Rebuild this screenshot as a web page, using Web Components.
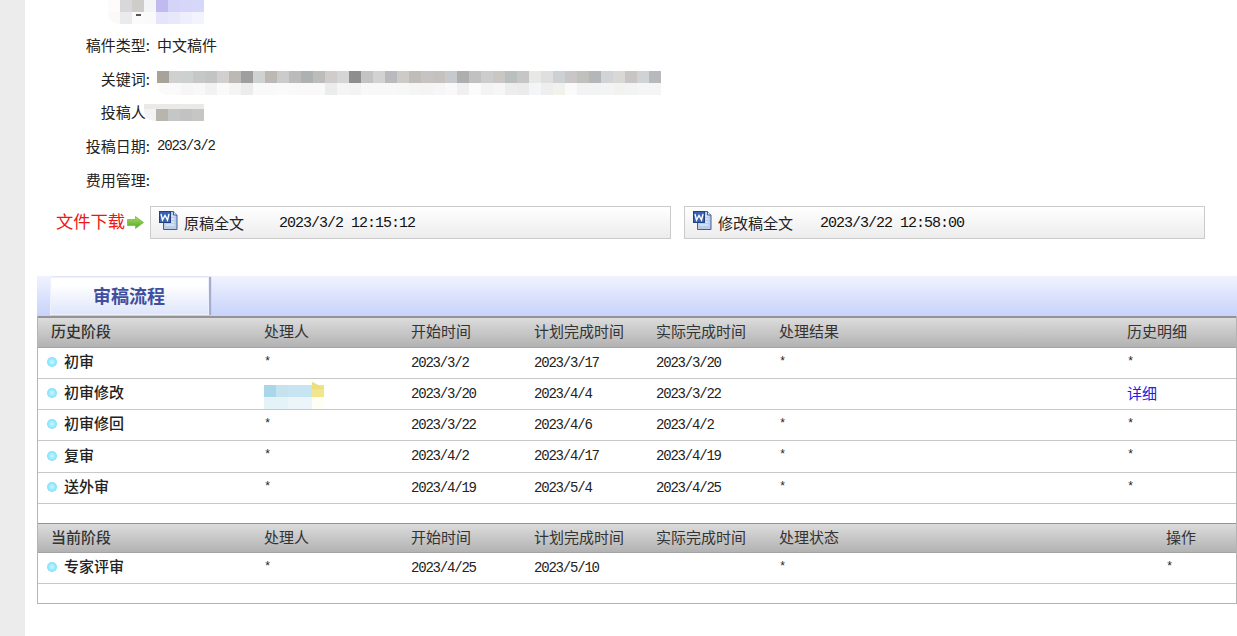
<!DOCTYPE html>
<html lang="zh">
<head>
<meta charset="utf-8">
<title>审稿流程</title>
<style>
  html, body { margin: 0; height: 636px; overflow: hidden; background: #fff; }
  body { font: 15px/20px "Noto Sans CJK SC", sans-serif; color: #222; }
</style>
</head>
<body>
<page-shell>
  <mosaic-strip top="#fdfcfa,#d8d8da,#cfcdc9,#f3f4f6,#c0baf0,#d4d4f8,#d6d6f8,#d6d8fa" bottom="#fbfaf8,#eaebec,#fbfbfb,#fafafb,#e6e4fa,#e8e8fb,#eeeefc,#f3f3fd" style="margin-left:83px;height:24px"><span style="position:absolute;left:28px;top:14px;width:5px;height:2px;background:#555"></span></mosaic-strip>
  <info-row label="稿件类型:" style="margin-top:4px"><span>中文稿件</span></info-row>
  <info-row label="关键词:">
    <mosaic-strip top="#a8a29c,#d0d0d0,#cdd0d0,#c6c8c8,#c2c4c4,#d2d0ce,#bcb8b4,#9e9e9e,#ced2d0,#bcb8b4,#cbcbcb,#bdbabc,#adb1b1,#bcbdbb,#d0cccb,#d5d5d7,#8e8e8e,#c4c2c2,#d2d2d0,#b8babe,#cdcbc8,#c0bdb8,#c6c3c2,#c5c1bf,#c6cace,#aeaeae,#c1c1c3,#cbcccb,#c8c7c3,#b9bfbf,#c6c6c6,#e8e8e6,#e0dfdf,#cdd1d3,#cac5c6,#c0c0bd,#b4b6b9,#d1d3d6,#d9d8d5,#c9c5c4,#d0d3d6,#b8b9bd" bottom="#fafafa,#fafafa,#f6f6f6,#f8f8f8,#f2f2f2,#fafafa,#f4f4f4,#ececec,#f9f9f9,#f9f9f9,#fafafa,#f9f9f9,#f9f9f9,#f9f9f9,#ececec,#f5f5f5,#f3f3f3,#f8f8f8,#f8f8f8,#f8f8f8,#f7f7f7,#f5f5f5,#f4f4f4,#f6f6f6,#f9f9f9,#f0f0f0,#fbfbfb,#f3f3f3,#f6f6f6,#ededed,#ebebeb,#f3f5f8,#eeeeee,#f1f1ee,#fafafa,#f3f3f3,#f2f4f3,#f4f4f4,#f2f2f0,#f3f3f3,#f5f5f5,#f5f5f5" style="height:24px;margin-top:8px"></mosaic-strip>
  </info-row>
  <info-row label="投稿人:" style="--value-shift:-13px">
    <mosaic-strip top="#f3f3f5,#b8b4ae,#c4c7c5,#c2c2c2,#c6c6c4" bottom="#f3f3f5,#b8b4ae,#c4c7c5,#c2c2c2,#c6c6c4" style="height:12px;border-top:5px solid #ebe9e7"></mosaic-strip>
  </info-row>
  <info-row label="投稿日期:"><span class="num">2023/3/2</span></info-row>
  <info-row label="费用管理:"></info-row>

  <download-bar>
    <file-box name="原稿全文" time="2023/3/2 12:15:12" gap="35"></file-box>
    <file-box name="修改稿全文" time="2023/3/22 12:58:00" gap="27"></file-box>
  </download-bar>

  <section-tab title="审稿流程"></section-tab>

  <flow-table>
    <flow-head cells="历史阶段|处理人|开始时间|计划完成时间|实际完成时间|处理结果|历史明细" style="height:32px"></flow-head>
    <flow-row name="初审" cells="*|2023/3/2|2023/3/17|2023/3/20|*|*"></flow-row>
    <flow-row name="初审修改" cells="|2023/3/20|2023/4/4|2023/3/22||详细" blur></flow-row>
    <flow-row name="初审修回" cells="*|2023/3/22|2023/4/6|2023/4/2|*|*"></flow-row>
    <flow-row name="复审" cells="*|2023/4/2|2023/4/17|2023/4/19|*|*" style="height:32px"></flow-row>
    <flow-row name="送外审" cells="*|2023/4/19|2023/5/4|2023/4/25|*|*"></flow-row>
    <flow-spacer></flow-spacer>
    <flow-head cells="当前阶段|处理人|开始时间|计划完成时间|实际完成时间|处理状态|操作" shift-last style="height:30px;border-top-width:1px"></flow-head>
    <flow-row name="专家评审" cells="*|2023/4/25|2023/5/10||*|*" shift-last></flow-row>
    <flow-spacer last></flow-spacer>
  </flow-table>
</page-shell>

<script>
const COLS = '226px 147px 123px 122px 123px 348px 1fr';
const MONO = '"Liberation Mono", monospace';

// dates use a tall narrow mono so digits are about as high as the CJK text
const DATE_FONT = `font: 14px/20px ${MONO}; letter-spacing: -1.2px;`;

class PageShell extends HTMLElement {
  connectedCallback() {
    this.attachShadow({ mode: 'open' });
    this.shadowRoot.innerHTML = `
      <style>
        :host { display: block; height: 636px; background: #fff; border-left: 25px solid #ececec; box-sizing: border-box; }
      </style>
      <slot></slot>`;
  }
}

class MosaicStrip extends HTMLElement {
  connectedCallback() {
    const top = (this.getAttribute('top') || '').split(',');
    const bottom = (this.getAttribute('bottom') || '').split(',');
    const cells = list => list.map(c => `<i style="background:${c}"></i>`).join('');
    this.attachShadow({ mode: 'open' });
    this.shadowRoot.innerHTML = `
      <style>
        :host { display: block; position: relative; width: max-content; overflow: hidden; border-bottom-left-radius: 10px; }
        .row { display: flex; height: 50%; }
        i { display: block; width: 12px; flex: none; }
      </style>
      <div class="row">${cells(top)}</div>
      <div class="row">${cells(bottom)}</div>
      <slot></slot>`;
  }
}

class InfoRow extends HTMLElement {
  connectedCallback() {
    this.attachShadow({ mode: 'open' });
    this.shadowRoot.innerHTML = `
      <style>
        :host { display: flex; align-items: center; height: 33.75px; }
        .label { width: 125px; text-align: right; flex: none; white-space: nowrap; font-size: 15px; }
        .value { margin-left: calc(7px + var(--value-shift, 0px)); position: relative; font-size: 15px; }
        ::slotted(.num) { ${DATE_FONT} }
        ::slotted(span) { display: block; }
      </style>
      <div class="label">${this.getAttribute('label')}</div>
      <div class="value"><slot></slot></div>`;
  }
}

class DownloadBar extends HTMLElement {
  connectedCallback() {
    this.attachShadow({ mode: 'open' });
    this.shadowRoot.innerHTML = `
      <style>
        :host { display: flex; align-items: center; gap: 13px; margin-top: 9px; padding-left: 31px; height: 33px; }
        .label { display: flex; align-items: center; width: 94px; margin-right: -13px; padding-bottom: 2px; color: #f01414; font-size: 17.25px; white-space: nowrap; }
        svg { margin-left: 2px; margin-top: 2px; flex: none; }
      </style>
      <div class="label">文件下载
        <svg width="17" height="13" viewBox="0 0 17 13">
          <defs><linearGradient id="a" x1="0" x2="0" y1="0" y2="1"><stop offset="0" stop-color="#a8dc5c"/><stop offset="1" stop-color="#4fa82a"/></linearGradient></defs>
          <path d="M.5 3.5h8V.5l8 6-8 6v-3h-8z" fill="url(#a)" stroke="#7cb84a" stroke-width=".8"/>
        </svg>
      </div>
      <slot></slot>`;
  }
}

class FileBox extends HTMLElement {
  connectedCallback() {
    this.attachShadow({ mode: 'open' });
    this.shadowRoot.innerHTML = `
      <style>
        :host { display: flex; align-items: center; box-sizing: border-box; width: 521px; height: 33px; padding-left: 7px; border: 1px solid #cbcbcb; background: linear-gradient(#fff, #ececec); font-size: 15px; color: #222; }
        svg { flex: none; margin: -5px 6px 0 0; }
        .name { padding-top: 1px; }
        .time { font: 15px/20px "Liberation Mono", monospace; letter-spacing: -1px; color: #111; white-space: pre; padding-top: 3px; }
      </style>
      <svg width="20" height="21" viewBox="0 0 20 21">
        <path d="M5.500 2.500h10l3.500 3.500v14.500H5.500z" fill="#b9cce8" stroke="#3c5f9e"/>
        <path d="M7.500 7h9M7.500 10h9M7.500 13h9M7.500 16h9" stroke="#eef3fb" stroke-width="1.200"/>
        <path d="M15.500 2.500V6H19" fill="#e8eefa" stroke="#3c5f9e"/>
        <rect x="1.500" y="2.500" width="11" height="11" fill="#3a62b4" stroke="#22427f"/>
        <path d="M3 5l1.500 6L7 6.500 9.500 11 11 5" fill="none" stroke="#fff" stroke-width="1.400"/>
      </svg>
      <span class="name">${this.getAttribute('name')}</span>
      <span class="time" style="margin-left:${this.getAttribute('gap')}px">${this.getAttribute('time')}</span>`;
  }
}

class SectionTab extends HTMLElement {
  connectedCallback() {
    this.attachShadow({ mode: 'open' });
    this.shadowRoot.innerHTML = `
      <style>
        :host { display: flex; margin: 37px 0 0 12px; height: 40px; padding-left: 13px; box-sizing: border-box; background: linear-gradient(#f0f3fe, #c8d2fb); }
        .tab { box-sizing: border-box; width: 159px; height: 38px; margin-top: 1px; padding-left: 42px; background: linear-gradient(#fff 20%, #dfe5fb); border: 1px solid #eef0fb; box-shadow: 2px 0 1px #a4acd0; font-size: 18px; line-height: 34px; font-weight: 700; color: #3f4fa0; }
      </style>
      <div class="tab">${this.getAttribute('title')}</div>`;
  }
}

class FlowTable extends HTMLElement {
  connectedCallback() {
    this.attachShadow({ mode: 'open' });
    this.shadowRoot.innerHTML = `
      <style>
        :host { display: block; margin-left: 12px; border: solid #b4b4b4; border-width: 0 1px; }
      </style>
      <slot></slot>`;
  }
}

class FlowHead extends HTMLElement {
  connectedCallback() {
    const cells = this.getAttribute('cells').split('|');
    const last = cells.length - 1;
    const shift = this.hasAttribute('shift-last');
    this.attachShadow({ mode: 'open' });
    this.shadowRoot.innerHTML = `
      <style>
        :host { display: grid; grid-template-columns: ${COLS}; align-items: center; box-sizing: border-box; height: 31px; padding-bottom: 2px; border-top: 2px solid #949494; border-bottom: 1px solid #a4a4a4; background: linear-gradient(#dcdcdc, #b2b2b2); font-size: 15px; color: #333; }
        div { white-space: nowrap; }
        div:first-of-type { padding-left: 13px; font-weight: 500; }
      </style>
      ${cells.map((c, i) => `<div style="${i === last && shift ? 'padding-left:39px' : ''}">${c}</div>`).join('')}`;
  }
}

class FlowRow extends HTMLElement {
  connectedCallback() {
    const cells = this.getAttribute('cells').split('|');
    const last = cells.length - 1;
    const shift = this.hasAttribute('shift-last');
    const blur = this.hasAttribute('blur');
    const cell = (c, i) => {
      const pad = i === last && shift ? 'padding-left:39px;' : '';
      if (c === '详细') return `<div class="link" style="${pad}">${c}</div>`;
      return `<div class="${c === '*' ? 'star' : 'num'}" style="${pad}">${c}</div>`;
    };
    this.attachShadow({ mode: 'open' });
    this.shadowRoot.innerHTML = `
      <style>
        :host { display: grid; grid-template-columns: ${COLS}; align-items: center; box-sizing: border-box; height: 31px; border-bottom: 1px solid #c8c8c8; position: relative; font-size: 15px; color: #222; }
        .name { display: flex; align-items: center; font-weight: 500; padding: 0 0 3px 9px; white-space: nowrap; line-height: 18px; }
        .dot { width: 10px; height: 10px; border-radius: 50%; margin-right: 7px; margin-top: 2px; background: radial-gradient(circle, #d2f6ff 0, #8ce6ff 55%, #6cd6fa 100%); }
        .num { ${DATE_FONT} color: #222; }
        .star { font: 12px/20px ${MONO}; color: #222; margin-top: -2px; }
        .link { color: #2222dd; margin-top: -2px; }
        .blur { position: absolute; left: 226px; top: 6px; display: grid; grid-template-columns: repeat(5, 12px); grid-auto-rows: 12px; }
        .blur i { display: block; }
        .flag { position: absolute; left: 274px; top: 3px; width: 13px; height: 8px; background: #ecdf7c; clip-path: polygon(0 0, 100% 85%, 0 100%); }
      </style>
      <div class="name"><span class="dot"></span>${this.getAttribute('name')}</div>
      ${cells.map(cell).join('')}
      ${blur ? `<div class="blur">${['#a9d6e8','#c4e3ee','#c8e4f0','#c6e4f2','#f2e68c','#e4f3f8','#e4f3f8','#ecf6fa','#ecf6fa','#fffef6'].map(c => `<i style="background:${c}"></i>`).join('')}</div><div class="flag"></div>` : ''}`;
  }
}

class FlowSpacer extends HTMLElement {
  connectedCallback() {
    this.attachShadow({ mode: 'open' });
    this.shadowRoot.innerHTML = `
      <style>
        :host { display: block; height: 19px; }
        :host([last]) { height: 20px; box-sizing: border-box; border-bottom: 1px solid #b4b4b4; }
      </style>`;
  }
}

customElements.define('page-shell', PageShell);
customElements.define('mosaic-strip', MosaicStrip);
customElements.define('info-row', InfoRow);
customElements.define('download-bar', DownloadBar);
customElements.define('file-box', FileBox);
customElements.define('section-tab', SectionTab);
customElements.define('flow-table', FlowTable);
customElements.define('flow-head', FlowHead);
customElements.define('flow-row', FlowRow);
customElements.define('flow-spacer', FlowSpacer);
</script>
</body>
</html>
